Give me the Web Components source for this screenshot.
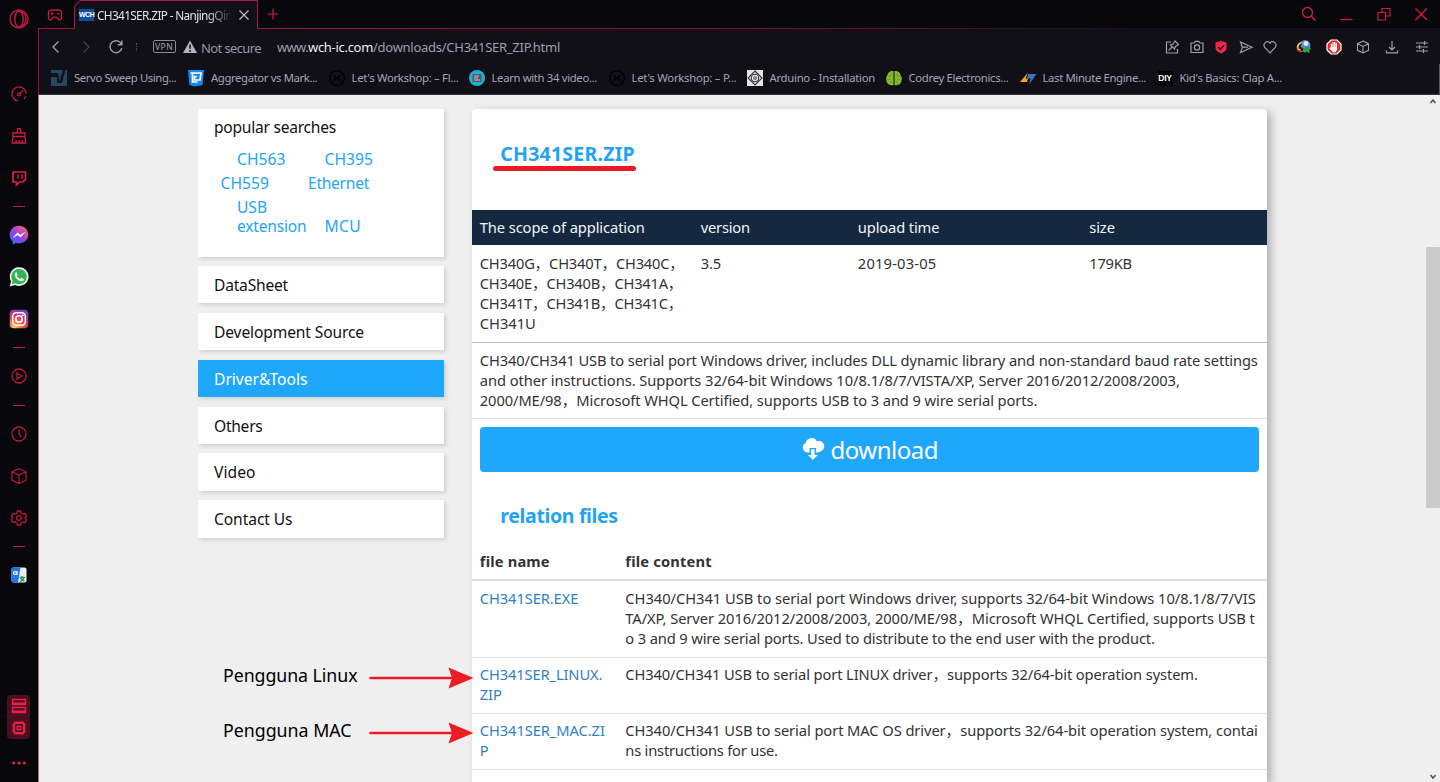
<!DOCTYPE html>
<html lang="en">
<head>
<meta charset="utf-8">
<title>CH341SER.ZIP</title>
<style>
html,body{margin:0;height:100%;overflow:hidden}
body{font-family:"Noto Sans","Noto Sans CJK SC",sans-serif;background:#08070c}
</style>
</head>
<body>
<browser-window></browser-window>
<script>
const ICONS = {
  opera:'<g fill="none" stroke="#c01a40" stroke-width="1.4"><circle cx="10" cy="10" r="9"/><ellipse cx="10" cy="10" rx="4.2" ry="8"/><path d="M12 2.3c4 2 5 5 5 7.700s-1 5.700-5 7.700"/></g>',
  gauge:'<g fill="none" stroke="#c01a40" stroke-width="1.3"><path d="M9 16.800A7 7 0 1 1 17 9.500M16.800 12l-1.500 3"/><circle cx="10" cy="10.500" r="1.400"/><path d="M11 9.500l3-3"/></g>',
  brush:'<g fill="none" stroke="#c81c42" stroke-width="1.3"><path d="M8.500 7V2.700h3V7M4 7h12v3.500H4zM4 10.500L3.200 17h13.600L16 10.500M7 17v-3M10 17v-3M13 17v-3"/></g>',
  twitch:'<path fill="none" stroke="#e01c48" stroke-width="1.7" d="M4 4h12.500v7.500L13.500 14h-3l-3 3v-3H4z"/><path stroke="#e01c48" stroke-width="1.5" d="M9 6.500v4M13 6.500v4"/>',
  messenger:'<defs><linearGradient id="m" x1="0" y1="1" x2=".8" y2="0"><stop stop-color="#1878ff"/><stop offset=".5" stop-color="#9440e8"/><stop offset="1" stop-color="#ff6070"/></linearGradient></defs><path fill="url(#m)" d="M10 .7C4.500.7.700 4.700.700 9.800c0 3 1.200 5.200 3.100 6.900v2.700l2.800-1.500c1 .3 2.200.5 3.400.5 5.400 0 9.300-3.900 9.300-8.800S15.400.7 10 .7z"/><path d="M4.500 12.200l4-4.300 3 2.300 4-2.600-4 4.400-3-2.300z" fill="#fff" stroke="#fff" stroke-width=".7"/>',
  whatsapp:'<path fill="#eee" d="M.6 19.400l1.500-5A9.400 9.400 0 1 1 6 18z"/><path fill="#2fb654" d="M2.700 17.200l1-3.300a7.700 7.700 0 1 1 2.600 2.400z"/><path fill="#fff" d="M7 5.300c-2.500 1.600-.8 5 1.300 7 2 1.900 5 3.100 6.400.8.300-1-.2-1.200-2.200-2.200-.6-.3-1 1-1.500 1-1.500-.5-3-2-3.300-3.100.9-.8 1-1 .6-1.800C7.800 5.400 7.600 5 7 5.300z"/>',
  insta:'<defs><radialGradient id="g" cx=".25" cy="1" r="1.150"><stop stop-color="#ffd060"/><stop offset=".4" stop-color="#f06040"/><stop offset=".65" stop-color="#c63380"/><stop offset="1" stop-color="#5548cc"/></radialGradient></defs><rect x=".7" y=".7" width="18.600" height="18.600" rx="4" fill="url(#g)"/><g fill="none" stroke="#fff" stroke-width="1.500"><rect x="3.700" y="3.700" width="12.600" height="12.600" rx="3.500"/><circle cx="10" cy="10" r="3.200"/></g><circle cx="13.800" cy="6.200" r=".9" fill="#fff"/>',
  play:'<g fill="none" stroke="#b81a3e" stroke-width="1.300"><circle cx="10" cy="10" r="7"/><path d="M8 7l5 3-5 3z"/></g>',
  clock:'<g fill="none" stroke="#b81a3e" stroke-width="1.300"><circle cx="10" cy="10" r="7"/><path d="M10 5.500V10l2.200 3"/></g>',
  cube:'<path fill="none" stroke="#b81a3e" stroke-width="1.200" stroke-linejoin="round" d="M10 2.800l7 3v8.400l-7 3.300-7-3.300V5.800zM3 5.800l7 3.200 7-3.200M10 9v8.500"/>',
  gear:'<g fill="none" stroke="#b81a3e" stroke-width="1.300" stroke-linejoin="round"><path d="M8.300 3h3.400l.5 2.300 1.500.9 2.200-.8 1.700 2.900-1.700 1.700 1.700 1.700-1.700 2.900-2.200-.8-1.500.9-.5 2.300H8.300l-.5-2.300-1.500-.9-2.200.8-1.700-2.900L4.100 10 2.400 8.300l1.700-2.900 2.200.8 1.500-.9z"/><circle cx="10" cy="10" r="2.300"/></g>',
  translate:'<rect x="2.500" y="2.500" width="15" height="15" rx="2" fill="#e8eef0"/><path fill="#1f78e8" d="M4.500 2.500h7L9 17.500H4.500a2 2 0 0 1-2-2v-11a2 2 0 0 1 2-2z"/><g fill="none" stroke="#fff" stroke-width="1.200"><circle cx="6" cy="8" r="1.500"/><path d="M8 6v4"/></g><path fill="none" stroke="#35944a" stroke-width="1.300" d="M10.500 12.500h5.500M13 11v1.500M14.500 12.500c0 2-1.500 3.500-3.500 4M11.500 13c.5 1.500 2 2.500 4 3"/>',
  disk:'<g fill="none" stroke="#ee2048" stroke-width="1.300"><path d="M3.500 3.500h13v5h-13zM3.500 11.500h13v5h-13zM3.500 7.200h13M3.500 15.200h13"/></g>',
  chip:'<g fill="none" stroke="#ee2048"><rect x="5" y="5" width="10" height="10" rx="1" stroke-width="1.800"/><rect x="8.300" y="8.300" width="3.400" height="3.400" stroke-width="1.400"/><path stroke-width="1.200" d="M7 5V3M10 5V3M13 5V3M7 17v-2M10 17v-2M13 17v-2M3 7h2M3 10h2M3 13h2M15 7h2M15 10h2M15 13h2"/></g>',
  dots:'<g fill="#e81e48"><circle cx="4.700" cy="10" r="1.600"/><circle cx="10" cy="10" r="1.600"/><circle cx="15.300" cy="10" r="1.600"/></g>',
  pad:'<path fill="none" stroke="#c81c42" stroke-width="1.300" stroke-linejoin="round" d="M6 5h8l2.500 1.300v7.500l-2.200 1.400-2.600-3H8.300l-2.600 3-2.200-1.400V6.300z"/><path stroke="#c81c42" stroke-width="1.200" d="M5.500 8.700h3M7 7.200v3M12 8.700h2.500"/>',
  close:'<path stroke="#c0bcc8" stroke-width="1.300" d="M5 5l10 10M15 5L5 15"/>',
  plus:'<path stroke="#c81c42" stroke-width="1.200" d="M10 4.500v11M4.500 10h11"/>',
  back:'<path fill="none" stroke="#a29cb0" stroke-width="1.300" d="M12.500 4.500L7 10l5.500 5.500"/>',
  fwd:'<path fill="none" stroke="#45414f" stroke-width="1.200" d="M7.500 4.500L13 10l-5.500 5.500"/>',
  reload:'<path fill="none" stroke="#a29cb0" stroke-width="1.400" d="M15.600 7.500a6 6 0 1 0 .2 3.800M15.900 3.500v4.200h-4.200"/>',
  warn:'<path fill="#b5b0c4" d="M10 3.500l7 12.500H3z"/><path stroke="#15131c" stroke-width="1.600" d="M10 7.500v4.300M10 13v1.700"/>',
  pinedit:'<g fill="none" stroke="#a29cb0" stroke-width="1.200"><path d="M9 5H4.500v11h11v-4M6.500 13.500l3.500-3.500M8.500 8l4 4 1-2.500 3-2-3.500-3.500-2 3z"/></g>',
  camera:'<g fill="none" stroke="#a29cb0" stroke-width="1.200"><path d="M4 6h3l1.200-1.700h3.600L13 6h3v9.500H4z"/><circle cx="10" cy="10.500" r="2.600"/></g>',
  shield:'<path fill="#fa2350" d="M10 4l5.500 1.500v5.500c0 2.500-3 4.500-5.500 5.500-2.500-1-5.500-3-5.500-5.500V5.500z"/><path fill="none" stroke="#15131c" stroke-width="1.500" d="M7 10l2.400 2.300 3.800-4"/>',
  send:'<path fill="none" stroke="#a29cb0" stroke-width="1.200" d="M4.500 5l11.500 5.200-11.500 5.300 2-5.300zM6.500 10.200H12"/>',
  heart:'<path fill="none" stroke="#a29cb0" stroke-width="1.200" d="M10 15.800L5 10.600C2.200 7.500 6.600 2 10 6.200c3.400-4.200 7.800 1.300 5 4.400z"/>',
  globe:'<circle cx="11" cy="8.500" r="5.500" fill="#5688cf"/><circle cx="12" cy="6.500" r="2.500" fill="#d8e8f0"/><path fill="none" stroke="#110f18" stroke-width="4" d="M7 5.500c-4 3-3 8 2 7"/><path fill="none" stroke="#e8d04a" stroke-width="1.800" d="M7.500 5.500c-4.500 2-5.500 7-1 7.500"/><path fill="none" stroke="#c44431" stroke-width="1.300" d="M3 11.500c1 3.500 4 3 7 2.500"/><path fill="#25a52e" d="M9 12l5-3 .3 2 3 .3-2 2 .5 3-3-1.500-2.500 1z"/>',
  hand:'<path fill="#e22a26" stroke="#fff" stroke-width="1.200" d="M7 3h6l4 4v6l-4 4H7l-4-4V7z"/><path fill="#fff" d="M6.700 10V6.800h1.200V10h.5V5.300h1.300V10h.4V5h1.300v5h.4V6h1.200v7l-1.500 2.300H9L5.500 11.500z"/>',
  box:'<path fill="none" stroke="#a29cb0" stroke-width="1.100" d="M10 4l5.500 2.700v6.600L10 16l-5.500-2.700V6.700zM4.500 6.700L10 9.500l5.500-2.800M10 9.500V16"/>',
  dl:'<path fill="none" stroke="#a29cb0" stroke-width="1.200" d="M10 4v9M7 10l3 3 3-3M4.500 13.500v2.300h11v-2.300"/>',
  sliders:'<path stroke="#a29cb0" stroke-width="1.200" d="M4 6h12M4 10h12M4 14h12M12.500 4v4M7.500 8v4M11.500 12v4"/>',
  search:'<g fill="none" stroke="#d01c44" stroke-width="1.400"><circle cx="8.500" cy="8.500" r="5"/><path d="M12 12l4.500 4.500"/></g>',
  min:'<path stroke="#c81c42" stroke-width="1.300" d="M4.500 15.500H16"/>',
  restore:'<path fill="none" stroke="#c81c42" stroke-width="1.200" d="M4 8.500h7.500V16H4zM8 8.500V4.500h8V12h-4.500"/>',
  quit:'<path stroke="#d01c44" stroke-width="1.400" d="M4.500 4.500l11.500 11.500M16 4.500L4.500 16"/>',
  servo:'<rect x="2" y="2" width="16" height="16" fill="#24485f"/><path fill="#10131d" d="M2 5h7l1.500 8L14 2h2.500l-3.500 13H8V9H2z"/>',
  agg:'<path fill="#1689ef" d="M2 2h16l-1.500 15-8 1.500-5-1.500z"/><path fill="none" stroke="#fff" stroke-width="1.700" d="M4.500 5h10.500L14 12H8.500V8.500h2.500M6.500 5v9h5"/>',
  work:'<circle cx="10" cy="10" r="7.300" fill="#11101a" stroke="#020204" stroke-width="1.500"/><path fill="none" stroke="#020204" stroke-width="1.500" d="M6.500 7l2.500 3-2.500 3M13.500 7L11 10l2.500 3M8 10h4"/>',
  learn:'<circle cx="10" cy="10" r="8" fill="#1bb2d3"/><rect x="5.500" y="6" width="9" height="8" fill="#5b5560"/><path stroke="#c9c3c0" d="M7 8h5M7 10h4M7 12h6"/>',
  ard:'<rect x="2" y="2" width="16" height="16" fill="#e6e6e4"/><g fill="none" stroke="#333" stroke-width="1.100"><path d="M10 3l7 7-7 7-7-7z"/><circle cx="10" cy="10" r="3.700"/></g><circle cx="10" cy="10" r="2" fill="#688a86"/>',
  brain:'<path fill="#84bb30" d="M9.500 3v14c-4 1-7-1.500-7-4.500-1-3 .5-5 1-5.500.5-3 3-4.500 6-4zM10.500 3v14c4 1 7-1.500 7-4.500 1-3-.5-5-1-5.500-.500-3-3-4.500-6-4z"/><path fill="none" stroke="#5f8f2a" stroke-width=".7" d="M4 8l3 1M4 12l3-1M7 5v3M7 13v3M16 8l-3 1M16 12l-3-1M13 5v3M13 13v3"/>',
  bolt:'<path fill="#f2a51e" d="M10 4.500L2 14h7l1-3.500H7.500z"/><path fill="#3279c4" d="M10 6h8.500L11 16.500l1.500-6H9z"/>',
  cloud:'<path fill="#fff" d="M6.500 14.500A5.200 5.200 0 0 1 4.700 4.700 6 6 0 0 1 15.800 3.200a5.200 5.200 0 0 1 4 10.100l-2.700 1.200h-2V10H8.600v4.500z"/><path fill="#fff" d="M10.200 11.200h3.400V17h3.200L11.900 22 7 17h3.200z"/>'
};

// Base: renders a template string with its scoped styles into an open root.
class Base extends HTMLElement {
  constructor(){ super(); this.attachShadow({mode:'open'}); }
  connectedCallback(){
    if (this.shadowRoot.firstChild) return;
    const t = document.createElement('template');
    t.innerHTML = '<style>*{box-sizing:border-box}' + this.css() + '</style>' + this.html();
    this.shadowRoot.append(t.content.cloneNode(true));
  }
}

class UiIcon extends Base {
  css(){ const s=this.getAttribute('size')||20; return `:host{display:block;flex:none;width:${s}px;height:${s}px}svg{display:block;width:100%;height:100%}`; }
  html(){ return `<svg viewBox="${this.getAttribute('box')||'0 0 20 20'}">${ICONS[this.getAttribute('name')]}</svg>`; }
}

// One line of text, tracked so that it fills the width given in "w".
class TextLine extends Base {
  css(){ return `:host{display:block;white-space:nowrap}span{display:inline-block;white-space:pre}`; }
  html(){ return '<span><slot></slot></span>'; }
  connectedCallback(){
    super.connectedCallback();
    const w = parseFloat(this.getAttribute('w'));
    if (!w) return;
    const s = this.shadowRoot.querySelector('span');
    const n = this.textContent.length;
    s.style.letterSpacing = ((w - s.getBoundingClientRect().width) / n).toFixed(4) + 'px';
  }
}

class SideRail extends Base {
  css(){ return `:host{display:flex;flex-direction:column;align-items:center;width:38px;height:782px;background:#08070c;padding-right:1px}
  .c{height:42px;display:flex;align-items:center}.o{height:38px;margin-bottom:34.700px}
  .d{height:15.400px;display:flex;align-items:center}.d::before{content:"";width:12px;height:1px;background:#c01a40}
  .b{margin-top:auto;width:23px;height:44px;border-radius:4px;background:#4a0e20;display:flex;flex-direction:column;align-items:center;justify-content:space-between;padding:1px 0}
  .m{height:43px;padding-top:5px}`; }
  html(){
    const c=(n,s=20)=>`<div class="c"><ui-icon name="${n}" size="${s}"></ui-icon></div>`, d='<div class="d"></div>';
    return `<div class="c o"><ui-icon name="opera"></ui-icon></div>${c('gauge')}${c('brush')}${c('twitch')}${d}${c('messenger')}${c('whatsapp')}${c('insta')}${d}${c('play')}${d}${c('clock')}${c('cube')}${c('gear')}${d}${c('translate')}
    <div class="b"><ui-icon name="disk"></ui-icon><ui-icon name="chip"></ui-icon></div><div class="c m"><ui-icon name="dots"></ui-icon></div>`;
  }
}

class TabStrip extends Base {
  css(){ return `:host{display:flex;height:29px;background:#08070c;color:#e6e3ea}
  .g{width:36px;border-bottom:1px solid #a8163a;padding:5px 0 0 7px}
  .tab{width:184px;height:29px;position:relative;background:#110f18;display:flex;align-items:center;padding:0 4px 0 5px;gap:3px}
  .tab svg{position:absolute;left:0;top:0}
  .fav{width:15px;height:12px;background:#124f9e;font:700 7px/12px "Liberation Sans",sans-serif;letter-spacing:-.5px;text-align:center;color:#fff;flex:none}
  .t{font-size:11.800px;line-height:20px;width:135px;-webkit-mask:linear-gradient(90deg,#000 110px,transparent 135px)}
  .r{flex:1;border-bottom:1px solid;border-image:linear-gradient(90deg,#a8163a,#7c1430 40%,#17101a 75%) 1;display:flex;padding:4px 9px 0 5px}
  .w{margin-left:auto;display:flex;gap:17.500px}`; }
  html(){ return `<div class="g"><ui-icon name="pad"></ui-icon></div>
  <div class="tab"><svg width="184" height="29"><path d="M.5 29V6.500L6 .5h177.500V28.500H184" fill="none" stroke="#b4183c"/></svg><span class="fav">WCH</span><div class="t"><text-line w="135">CH341SER.ZIP - NanjingQin</text-line></div><ui-icon name="close" size="18"></ui-icon></div>
  <div class="r"><ui-icon name="plus"></ui-icon><div class="w"><ui-icon name="search"></ui-icon><ui-icon name="min"></ui-icon><ui-icon name="restore"></ui-icon><ui-icon name="quit"></ui-icon></div></div>`; }
}

class AddressBar extends Base {
  css(){ return `:host{display:flex;height:35px;align-items:center;background:#110f18;color:#9a95a8;padding:0 8px 0 6.500px;font-size:13px;line-height:20px}
  .nav{display:flex;gap:10px}.sep{width:1px;height:8px;border-left:1px dotted #555060;margin:0 16px 0 10px}
  .vpn{width:23px;height:13px;border:1px solid #8f899d;border-radius:2px;font-size:8.500px;line-height:11px;text-align:center;color:#aaa5b6;letter-spacing:.5px}
  .ns{margin:2px 16px 0 1.500px}.u{display:flex;color:#a39db2}.u b{font-weight:400;color:#f0edf4}
  .r{margin-left:auto;display:flex;align-items:center}`; }
  html(){
    const r=[['pinedit',4.5],['camera',4.5],['shield',4.5],['send',4.5],['heart',14],['globe',9.5],['hand',9],['box',9],['dl',10.500],['sliders',0]];
    return `<div class="nav"><ui-icon name="back"></ui-icon><ui-icon name="fwd"></ui-icon><ui-icon name="reload"></ui-icon></div><i class="sep"></i><span class="vpn">VPN</span><ui-icon style="margin-left:4px" name="warn"></ui-icon>
    <text-line class="ns" w="60">Not secure</text-line><div class="u"><text-line w="31">www.</text-line><b><text-line w="65">wch-ic.com</text-line></b><text-line w="187">/downloads/CH341SER_ZIP.html</text-line></div>
    <div class="r">${r.map(([n,g])=>`<ui-icon name="${n}" style="margin-right:${g}px"></ui-icon>`).join('')}</div>`;
  }
}

class BookmarksBar extends Base {
  css(){ return `:host{display:grid;grid-template-columns:137px 140.500px 140px 140px 138px 139px 134px 137px 130px;height:31px;background:#110f18;color:#a7a3bd;padding:4px 0 0 10px;font-size:11.300px;line-height:20px;border-bottom:1px solid #35333b;border-right:1px solid #55535a}
  div{display:flex;gap:5px;align-items:center;height:20px}
  b{width:15px;height:15px;margin:0 2px 0 3px;background:#000;color:#fff;font:700 8.500px/15px "Liberation Sans",sans-serif;letter-spacing:-.2px;text-align:center}`; }
  html(){
    return [['servo','Servo Sweep Using...',102.500],['agg','Aggregator vs Mark...',106.500],['work',"Let's Workshop: – Fl...",107],['learn','Learn with 34 video...',105.500],['work',"Let's Workshop: – P...",105],['ard','Arduino - Installation',105.500],['brain','Codrey Electronics...',100],['bolt','Last Minute Engine...',103.500],['',"Kid's Basics: Clap A...",102.500]]
    .map(([i,t,w])=>`<div>${i?`<ui-icon name="${i}" size="20"></ui-icon>`:'<b>DIY</b>'}<text-line w="${w}">${t}</text-line></div>`).join('');
  }
}

class SearchCard extends Base {
  css(){ return `:host{display:block;height:147.500px;background:#fff;box-shadow:2px 2px 4px #0002;padding:7px 16px;font-size:15.600px;line-height:22px;color:#111}
  .r{display:grid;grid-template-columns:87.500px 1fr;align-items:end;color:#22a4f7;line-height:19px;margin-left:23px}
  .a{margin-top:11.500px}.s{margin-left:6.500px;margin-top:5px}.z{margin-top:5px}`; }
  html(){ return `<text-line w="122">popular searches</text-line>
  <div class="r a"><text-line w="48.500">CH563</text-line><text-line w="48.500">CH395</text-line></div>
  <div class="r s"><text-line w="48.500">CH559</text-line><text-line w="61">Ethernet</text-line></div>
  <div class="r z"><div><text-line w="30">USB</text-line><text-line w="69.500">extension</text-line></div><text-line w="36.500">MCU</text-line></div>`; }
}

class MenuCard extends Base {
  css(){ return `:host{display:block;height:37.500px;background:#fff;box-shadow:2px 2px 4px #0002;padding-left:16px;font-size:15.600px;line-height:38px;color:#111}:host([active]){background:#1fa7fc;color:#fff}`; }
  html(){ return '<slot></slot>'; }
}

class DataRow extends Base {
  css(){ return `:host{display:grid;grid-template-columns:var(--cols);padding:7.200px 0 0 7.800px;height:var(--h);line-height:20px}`; }
  html(){ return '<slot></slot>'; }
}

class DownloadButton extends Base {
  css(){ return `:host{display:flex;align-items:center;justify-content:center;gap:6px;height:45px;margin:8px 7.500px .500px;border-radius:4px;background:#1fa7fc;color:#fff;font-size:24px;line-height:40px}`; }
  html(){ return '<ui-icon name="cloud" box="0 0 24 24" size="24"></ui-icon><text-line w="107.500">download</text-line>'; }
}

class DetailPanel extends Base {
  css(){ return `:host{display:block;width:794.500px;height:673px;background:#fff;border-radius:4px 4px 0 0;box-shadow:4px 3px 9px #0004;font-size:14.700px;color:#333}
  .h{height:101px;padding:31px 0 0 28.300px;position:relative}.h i{position:absolute;left:20.500px;top:57px;width:143.500px;height:5px;border-radius:3px;background:#ec1a23}
  .t{font-weight:700;font-size:19.500px;line-height:28px;color:#1fa2f8}
  .head{background:#14293f;color:#f2f4f6;--h:35px;--cols:221px 157px 231.500px 1fr;padding-top:6.500px}
  .one{--h:98px;--cols:221px 157px 231.500px 1fr;border-bottom:1px solid #b9c1c4;line-height:20.300px;padding-top:7.500px}
  .desc{--h:76px;--cols:1fr;border-bottom:1px solid #ddd;padding-top:6.500px}
  .rel{height:77px;padding:29.500px 0 0 28.300px}
  .fh{--h:31.500px;--cols:145.500px 1fr;padding-top:1.300px;font-weight:700;border-bottom:2px solid #ddd}
  .f{--cols:145.500px 1fr;border-bottom:1px solid #ddd}.f>:first-child{color:#337fc4}.k{padding-top:6.600px}`; }
  html(){
    const l=(...a)=>'<div>'+a.map(([t,w])=>`<text-line w="${w}">${t}</text-line>`).join('')+'</div>';
    return `<div class="h"><text-line class="t" w="134.500">CH341SER.ZIP</text-line><i></i></div>
    <data-row class="head">${l(['The scope of application',165])}${l(['version',49])}${l(['upload time',81.5])}${l(['size',25.5])}</data-row>
    <data-row class="one">${l(['CH340G，CH340T，CH340C，',204],['CH340E，CH340B，CH341A，',202.5],['CH341T，CH341B，CH341C，',202.5],['CH341U',56])}${l(['3.5',20])}${l(['2019-03-05',78.5])}${l(['179KB',42.5])}</data-row>
    <data-row class="desc">${l(['CH340/CH341 USB to serial port Windows driver, includes DLL dynamic library and non-standard baud rate settings',778],['and other instructions. Supports 32/64-bit Windows 10/8.1/8/7/VISTA/XP, Server 2016/2012/2008/2003,',700],['2000/ME/98，Microsoft WHQL Certified, supports USB to 3 and 9 wire serial ports.',557.5])}</data-row>
    <download-button></download-button>
    <div class="rel"><text-line class="t" w="117.500">relation files</text-line></div>
    <data-row class="fh">${l(['file name',70])}${l(['file content',86.5])}</data-row>
    <data-row class="f" style="--h:76.500px">${l(['CH341SER.EXE',98.5])}${l(['CH340/CH341 USB to serial port Windows driver, supports 32/64-bit Windows 10/8.1/8/7/VIS',630.5],['TA/XP, Server 2016/2012/2008/2003, 2000/ME/98，Microsoft WHQL Certified, supports USB t',629.5],['o 3 and 9 wire serial ports. Used to distribute to the end user with the product.',529.5])}</data-row>
    <data-row class="f k" style="--h:56px">${l(['CH341SER_LINUX.',122.5],['ZIP',22])}${l(['CH340/CH341 USB to serial port LINUX driver，supports 32/64-bit operation system.',572.5])}</data-row>
    <data-row class="f k" style="--h:56px">${l(['CH341SER_MAC.ZI',125],['P',9])}${l(['CH340/CH341 USB to serial port MAC OS driver，supports 32/64-bit operation system, contai',632.5],['ns instructions for use.',152.5])}</data-row>`;
  }
}

// A hand-drawn callout laid over the page: a caption and an arrow.
class ArrowNote extends Base {
  css(){ return `:host{position:absolute;left:184px;display:flex;align-items:center;height:22px;color:#000;font-size:17.800px;line-height:22px}text-line{width:146px;margin-top:-6px}svg{display:block}`; }
  html(){ return `<text-line w="${this.getAttribute('w')}">${this.getAttribute('label')}</text-line><svg width="105" height="22"><path d="M1.500 11H82" stroke="#ed1c24" stroke-width="2.500" stroke-linecap="round"/><path d="M79.500.5L104.500 11 79.500 21.500 83 11z" fill="#ed1c24"/></svg>`; }
}

class PageView extends Base {
  css(){ return `:host{display:flex;position:relative;height:687px;overflow:hidden;background:#efefef;padding-top:14px}
  nav{width:246px;margin:0 28px 0 159px;display:flex;flex-direction:column;gap:9.400px}
  .sb{margin:-14px 0 0 auto;width:14px;height:687px;display:flex;flex-direction:column;align-items:center}
  .sb div{width:14px;height:261px;margin-top:140px;background:#cbcbcb}.sb svg:last-child{margin-top:auto}`; }
  html(){
    const m=[['DataSheet',74],['Development Source',150],['Driver&amp;Tools',93.5],['Others',48.5],['Video',41.5],['Contact Us',78.5]];
    return `<nav><search-card></search-card>${m.map(([t,w],i)=>`<menu-card ${i==2?'active':''}><text-line w="${w}">${t}</text-line></menu-card>`).join('')}</nav>
    <detail-panel></detail-panel>
    <div class="sb"><svg width="14" height="12"><path d="M4.500 8L7 5l2.500 3" fill="none" stroke="#555" stroke-width="1.600"/></svg><div></div><svg width="14" height="12"><path d="M4.500 5L7 8l2.500-3" fill="none" stroke="#555" stroke-width="1.600"/></svg></div>
    <arrow-note style="top:572px" label="Pengguna Linux" w="134.500"></arrow-note><arrow-note style="top:627px" label="Pengguna MAC" w="128.500"></arrow-note>`;
  }
}

class BrowserWindow extends Base {
  css(){ return `:host{display:flex;width:1440px;height:782px;overflow:hidden}main{width:1402px}section{border-left:1px solid #85152f;height:753px}page-view{margin-left:-1px;border-left:1px solid #b06a7c}`; }
  html(){ return `<side-rail></side-rail><main><tab-strip></tab-strip><section><address-bar></address-bar><bookmarks-bar></bookmarks-bar><page-view></page-view></section></main>`; }
}

for (const [n,c] of [['browser-window',BrowserWindow],['side-rail',SideRail],['tab-strip',TabStrip],['address-bar',AddressBar],['bookmarks-bar',BookmarksBar],['page-view',PageView],['search-card',SearchCard],['menu-card',MenuCard],['detail-panel',DetailPanel],['data-row',DataRow],['download-button',DownloadButton],['arrow-note',ArrowNote],['ui-icon',UiIcon],['text-line',TextLine]])
  customElements.define(n,c);
</script>
</body>
</html>
